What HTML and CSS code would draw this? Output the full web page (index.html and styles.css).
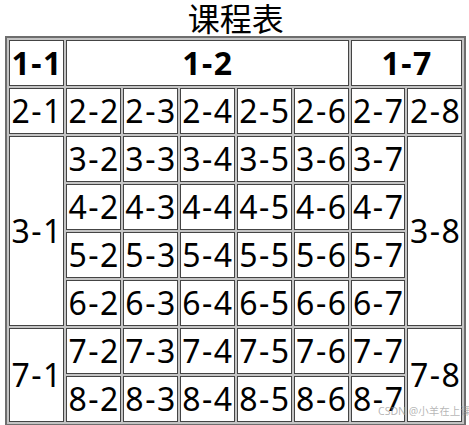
FILE: index.html
```html
<!DOCTYPE html>
<html lang="zh-CN">
<head>
<meta charset="utf-8">
<title>课程表</title>
<link rel="stylesheet" href="styles.css">
</head>
<body>
<div class="page">
  <table class="schedule">
    <caption class="title">课程表</caption>
    <tr>
      <th>1-1</th>
      <th colspan="5">1-2</th>
      <th colspan="2">1-7</th>
    </tr>
    <tr>
      <td>2-1</td><td>2-2</td><td>2-3</td><td>2-4</td><td>2-5</td><td>2-6</td><td>2-7</td><td>2-8</td>
    </tr>
    <tr>
      <td rowspan="4">3-1</td><td>3-2</td><td>3-3</td><td>3-4</td><td>3-5</td><td>3-6</td><td>3-7</td><td rowspan="4">3-8</td>
    </tr>
    <tr>
      <td>4-2</td><td>4-3</td><td>4-4</td><td>4-5</td><td>4-6</td><td>4-7</td>
    </tr>
    <tr>
      <td>5-2</td><td>5-3</td><td>5-4</td><td>5-5</td><td>5-6</td><td>5-7</td>
    </tr>
    <tr>
      <td>6-2</td><td>6-3</td><td>6-4</td><td>6-5</td><td>6-6</td><td>6-7</td>
    </tr>
    <tr>
      <td rowspan="2">7-1</td><td>7-2</td><td>7-3</td><td>7-4</td><td>7-5</td><td>7-6</td><td>7-7</td><td rowspan="2">7-8</td>
    </tr>
    <tr>
      <td>8-2</td><td>8-3</td><td>8-4</td><td>8-5</td><td>8-6</td><td>8-7</td>
    </tr>
  </table>
  <div class="watermark">CSDN @小羊在上课</div>
</div>
</body>
</html>
```
FILE: styles.css
```css
html, body {
  margin: 0;
  padding: 0;
  background: #ffffff;
}

.page {
  position: relative;
  width: 469px;
  height: 425px;
  padding-left: 5px;
  box-sizing: border-box;
  font-family: "Noto Sans", "Noto Sans CJK SC", sans-serif;
  color: #000000;
  overflow: hidden;
}

.schedule {
  width: 459px;
  border-collapse: separate;
  border-spacing: 2px;
  border: 2px solid #6e6e6e;
  background: #c4c4c4;
  font-size: 32px;
}

.title {
  height: 35px;
  padding-top: 1px;
  line-height: 36px;
  font-size: 32px;
  text-align: center;
  background: #ffffff;
}

.schedule th,
.schedule td {
  border: 1px solid #444444;
  background: #ffffff;
  padding: 0 0 0 1.5px;
  line-height: 44px;
  letter-spacing: 1.5px;
  text-align: center;
  vertical-align: middle;
  white-space: nowrap;
}

.schedule th {
  font-weight: 700;
}

.watermark {
  position: absolute;
  left: 378px;
  top: 405px;
  font-size: 10.5px;
  line-height: 13px;
  color: rgba(150, 150, 150, 0.7);
  white-space: nowrap;
}
```
